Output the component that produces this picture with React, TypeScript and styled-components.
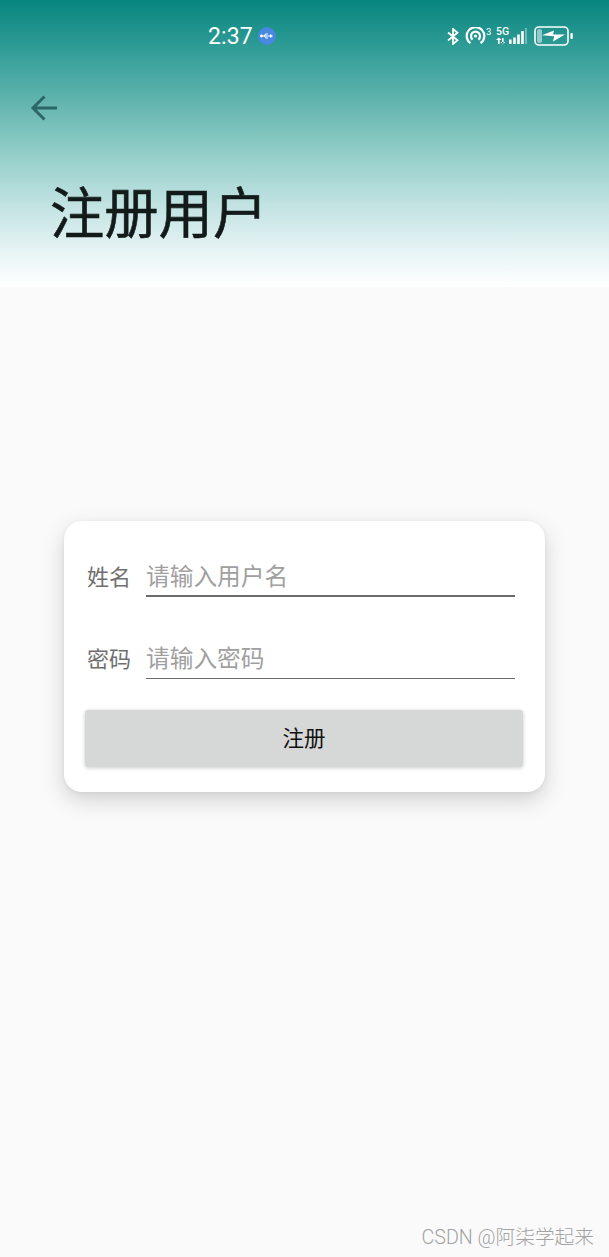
import * as React from "react"
import styled, { createGlobalStyle } from "styled-components"

const GlobalStyle = createGlobalStyle`
  html, body {
    margin: 0;
    padding: 0;
    background: #fafafa;
  }
  * {
    box-sizing: border-box;
  }
`

const cjk = `"Noto Sans CJK SC", "Noto Sans", sans-serif`

const Page = styled.div`
  width: 609px;
  height: 1257px;
  display: flex;
  flex-direction: column;
  overflow: hidden;
  background: #fafafa;
  font-family: ${cjk};
`

const Header = styled.header`
  height: 287px;
  flex: none;
  display: flex;
  flex-direction: column;
  background: linear-gradient(
    180deg,
    #07857f 0%,
    #3ba29c 21%,
    #66b6b0 37%,
    #97d0cb 55%,
    #c0e2e1 71%,
    #e6f3f4 87%,
    #ffffff 100%
  );
`

const StatusBar = styled.div`
  height: 72px;
  flex: none;
  padding-top: 21px;
  display: flex;
  align-items: flex-start;
  color: #fff;
`

const Clock = styled.span`
  margin-left: 208px;
  margin-top: 1px;
  font-family: "Roboto", sans-serif;
  font-size: 23px;
  line-height: 30px;
  letter-spacing: 0.1px;
`

const UsbBadge = styled.span`
  width: 18px;
  height: 18px;
  margin: 6px 0 0 5px;
  border-radius: 50%;
  background: #4788e2;
  display: flex;
  align-items: center;
  justify-content: center;
`

const StatusIcons = styled.div`
  margin-left: auto;
  margin-right: 36px;
  height: 30px;
  display: flex;
  align-items: center;
  gap: 6px;
`

const Network = styled.div`
  position: relative;
  width: 31px;
  height: 18px;
`

const NetworkLabel = styled.span`
  position: absolute;
  left: 0;
  top: -1px;
  font-family: "Roboto", sans-serif;
  font-size: 10.5px;
  line-height: 11px;
  font-weight: 500;
`

const Sup = styled.span`
  width: 5px;
  font-family: "Roboto", sans-serif;
  font-size: 9.5px;
  line-height: 10px;
  align-self: flex-start;
  margin: 6px -1px 0 -6px;
`

const BackButton = styled.button`
  width: 30px;
  height: 30px;
  margin: 21px 0 0 29px;
  padding: 0;
  border: 0;
  background: transparent;
  display: flex;
`

const Title = styled.h1`
  margin: 51px 0 0 50px;
  font-size: 54.3px;
  line-height: 72px;
  font-weight: 400;
  -webkit-text-stroke: 0.6px #121a1a;
  color: #121a1a;
`

const Main = styled.main`
  flex: 1;
  display: flex;
  flex-direction: column;
  align-items: center;
  padding-top: 234px;
`

const Card = styled.form`
  width: 481px;
  height: 271px;
  padding: 31px 22px 0 21px;
  background: #fff;
  border-radius: 18px;
  box-shadow: 0 8px 22px rgba(0, 0, 0, 0.17), 0 1px 4px rgba(0, 0, 0, 0.06);
`

const Row = styled.div`
  height: 45px;
  margin-bottom: 37px;
  padding-left: 2px;
  display: flex;
  align-items: flex-start;
`

const Label = styled.label`
  width: 59px;
  flex: none;
  font-size: 22px;
  line-height: 47px;
  color: #6f6f6f;
`

const Field = styled.div<{ $thick?: boolean }>`
  width: 369px;
  height: 45px;
  border-bottom: ${({ $thick }) => ($thick ? "2px" : "1px")} solid #6b6b6b;
  font-size: 23.7px;
  line-height: 47px;
  color: #a0a0a0;
  white-space: nowrap;
`

const Submit = styled.button`
  display: block;
  width: 438px;
  height: 57px;
  margin-top: -6px;
  padding: 0 0 4px;
  border: 0;
  border-radius: 3px;
  background: #d6d7d7;
  box-shadow: 0 1px 4px rgba(0, 0, 0, 0.2);
  font-family: ${cjk};
  font-size: 21.5px;
  color: #111;
`

const Watermark = styled.div`
  margin-top: auto;
  align-self: flex-end;
  margin-right: 15px;
  margin-bottom: 5px;
  font-family: "Roboto", ${cjk};
  font-size: 19.7px;
  font-weight: 300;
  line-height: 28px;
  color: #a3a3a3;
`

const BatteryIcon = styled.svg`
  margin-left: 1px;
`

const SignalIcon = styled.svg`
  position: absolute;
  left: 0;
  top: 0;
`

const BackArrow = () => (
  <svg width="30" height="30" viewBox="0 0 30 30" fill="none">
    <path
      d="M28 15H5M15.5 3.5 4 15l11.5 11.5"
      stroke="#2d6765"
      strokeWidth="3"
    />
  </svg>
)

const UsbGlyph = () => (
  <svg width="14" height="10" viewBox="0 0 14 10" fill="#fff">
    <path d="M0 4.5h10V3l3 2-3 2V5.5H0z" />
    <circle cx="1.6" cy="5" r="1.4" />
    <path d="M3.5 5 5.5 2.5H8v1H6L4.5 5z" />
    <path d="M5 5 6.2 6.5H8v1H5.7L4 5z" />
  </svg>
)

const Bluetooth = () => (
  <svg width="12" height="17" viewBox="0 0 12 17" fill="none" stroke="#fff" strokeWidth="1.8">
    <path d="M1 4.5 10.5 12.2 6 16V1l4.5 3.8L1 12.5" />
  </svg>
)

const Hotspot = () => (
  <svg width="21" height="18" viewBox="0 0 21 18" fill="none" stroke="#fff" strokeWidth="2.2">
    <path d="M5.5 16.2a8.8 8.8 0 1 1 10 0" />
    <path d="M7.6 12.6a4.5 4.5 0 1 1 5.8 0" />
    <circle cx="10.5" cy="9" r="1.5" fill="#fff" stroke="none" />
  </svg>
)

const Signal = () => (
  <SignalIcon width="31" height="18" viewBox="0 0 31 18" fill="#fff">
    <path d="M2 11h1.6v6H2zM0 13l2.8-2.4 2.8 2.4zM6 11h1.6v6H6zM4.4 15l2.4 2.4 2.4-2.4z" />
    <path d="M13 12.5h2.6V17H13zM17.2 10.5h2.6V17h-2.6zM21.2 7.5h2.6V17h-2.6z" />
    <path d="M25.2 4h2.6v13h-2.6z" />
    <path d="M29 1h2v16h-2z" opacity="0.35" />
  </SignalIcon>
)

const Battery = () => (
  <BatteryIcon width="39" height="20" viewBox="0 0 39 20" fill="none">
    <rect x="1" y="1" width="33" height="18" rx="4" stroke="#fff" strokeWidth="1.6" />
    <rect x="3" y="3" width="5" height="14" rx="2" fill="#fff" opacity="0.5" />
    <path d="M8 9.2 20 4.5l-1 4H31l-12 7 1.2-5.2z" fill="#fff" />
    <rect x="36.4" y="7" width="2.4" height="6" rx="1" fill="#fff" />
  </BatteryIcon>
)

const App = () => (
  <Page>
    <GlobalStyle />
    <Header>
      <StatusBar>
        <Clock>2:37</Clock>
        <UsbBadge>
          <UsbGlyph />
        </UsbBadge>
        <StatusIcons>
          <Bluetooth />
          <Hotspot />
          <Sup>3</Sup>
          <Network>
            <NetworkLabel>5G</NetworkLabel>
            <Signal />
          </Network>
          <Battery />
        </StatusIcons>
      </StatusBar>
      <BackButton type="button" aria-label="返回">
        <BackArrow />
      </BackButton>
      <Title>注册用户</Title>
    </Header>
    <Main>
      <Card>
        <Row>
          <Label>姓名</Label>
          <Field $thick>请输入用户名</Field>
        </Row>
        <Row>
          <Label>密码</Label>
          <Field>请输入密码</Field>
        </Row>
        <Submit type="button">注册</Submit>
      </Card>
      <Watermark>CSDN @阿柒学起来</Watermark>
    </Main>
  </Page>
)

export default App
